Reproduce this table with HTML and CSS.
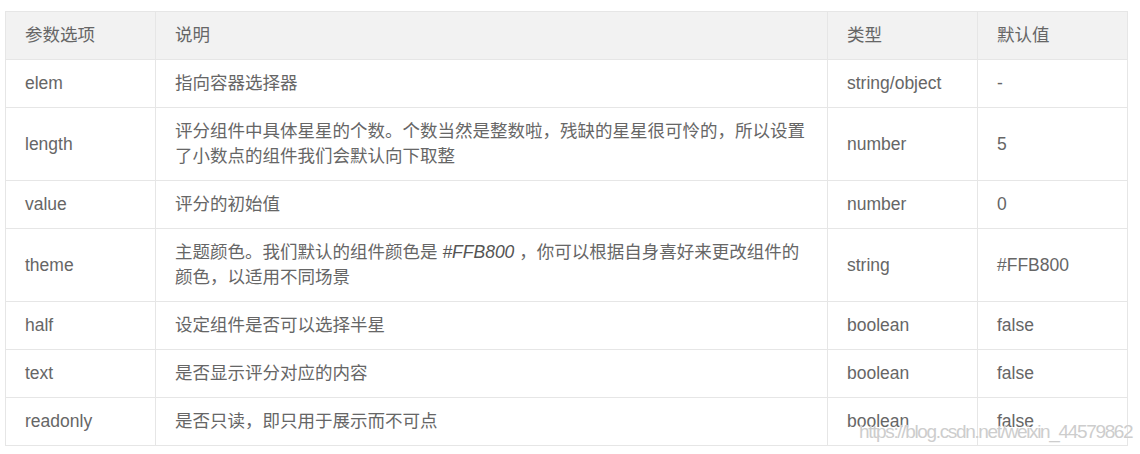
FILE: index.html
```html
<!DOCTYPE html>
<html lang="zh-CN">
<head>
  <meta charset="UTF-8" />
  <title>rate 参数选项</title>
  <link rel="stylesheet" href="styles.css">
</head>
<body>
  <div class="doc">
    <table class="params">
      <colgroup>
        <col class="col-name">
        <col class="col-desc">
        <col class="col-type">
        <col class="col-default">
      </colgroup>
      <thead>
        <tr>
          <th>参数选项</th>
          <th>说明</th>
          <th>类型</th>
          <th>默认值</th>
        </tr>
      </thead>
      <tbody>
        <tr>
          <td>elem</td>
          <td>指向容器选择器</td>
          <td>string/object</td>
          <td>-</td>
        </tr>
        <tr>
          <td>length</td>
          <td>评分组件中具体星星的个数。个数当然是整数啦，残缺的星星很可怜的，所以设置了小数点的组件我们会默认向下取整</td>
          <td>number</td>
          <td>5</td>
        </tr>
        <tr>
          <td>value</td>
          <td>评分的初始值</td>
          <td>number</td>
          <td>0</td>
        </tr>
        <tr>
          <td>theme</td>
          <td>主题颜色。我们默认的组件颜色是 <em>#FFB800</em> ，你可以根据自身喜好来更改组件的颜色，以适用不同场景</td>
          <td>string</td>
          <td>#FFB800</td>
        </tr>
        <tr>
          <td>half</td>
          <td>设定组件是否可以选择半星</td>
          <td>boolean</td>
          <td>false</td>
        </tr>
        <tr>
          <td>text</td>
          <td>是否显示评分对应的内容</td>
          <td>boolean</td>
          <td>false</td>
        </tr>
        <tr>
          <td>readonly</td>
          <td>是否只读，即只用于展示而不可点</td>
          <td>boolean</td>
          <td>false</td>
        </tr>
      </tbody>
    </table>
    <span class="watermark">https://blog.csdn.net/weixin_44579862</span>
  </div>
</body>
</html>
```

FILE: styles.css
```css
body {
  margin: 0;
  background-color: #fff;
  font-family: "Liberation Sans", Arial, "Noto Sans CJK SC", sans-serif;
  color: #666;
}

.doc {
  position: relative;
  width: 1123px;
  padding: 11px 0 0 5px;
}

.params {
  width: 1123px;
  border-collapse: collapse;
  table-layout: fixed;
  font-size: 17.5px;
  line-height: 25px;
}

.col-name,
.col-type,
.col-default {
  width: 150px;
}

.params th,
.params td {
  border: 1px solid #e6e6e6;
  padding: 11px 19px;
  text-align: left;
  font-weight: normal;
  vertical-align: middle;
}

.params thead tr {
  background-color: #f2f2f2;
}

.params em {
  font-style: italic;
  color: #555;
}

.watermark {
  position: absolute;
  left: 859px;
  top: 421px;
  font-size: 19px;
  letter-spacing: -1.35px;
  color: #cdcdcd;
  text-shadow: 0 0 1px #fff;
  white-space: nowrap;
}
```
